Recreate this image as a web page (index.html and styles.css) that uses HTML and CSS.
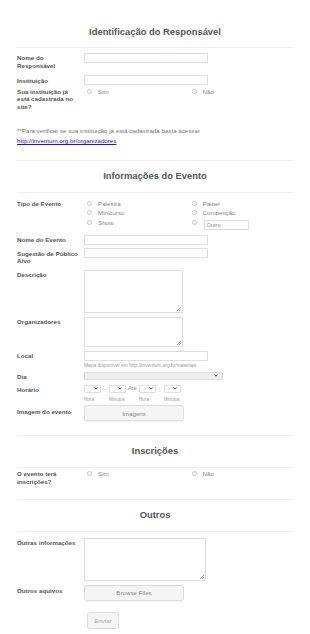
FILE: index.html
```html
<!DOCTYPE html>
<html lang="pt-BR">
<head>
    <meta charset="UTF-8">
    <meta name="viewport" content="width=device-width, initial-scale=1.0">
    <title>Cadastro de Evento</title>
    <link rel="stylesheet" href="styles.css">
</head>
<body>
    <form class="form">
        <h2 class="section-title first">Identificação do Responsável</h2>

        <div class="row row-nome">
            <label class="label">Nome do Responsável</label>
            <div class="field"><input type="text" class="text-input"></div>
        </div>
        <div class="row row-instituicao">
            <label class="label">Instituição</label>
            <div class="field"><input type="text" class="text-input"></div>
        </div>
        <div class="row row-cadastrada">
            <label class="label">Sua instituição já está cadastrada no site?</label>
            <div class="options">
                <label class="option"><input type="radio" name="cadastrada"> Sim</label>
                <label class="option"><input type="radio" name="cadastrada"> Não</label>
            </div>
        </div>
        <p class="note">
            **Para verificar se sua instituição já está cadastrada basta acessar<br>
            <a href="#">http://inventum.org.br/organizadores</a>
        </p>

        <h2 class="section-title">Informações do Evento</h2>

        <div class="row row-tipo">
            <label class="label">Tipo de Evento</label>
            <div class="options">
                <label class="option"><input type="radio" name="tipo"> Palestra</label>
                <label class="option"><input type="radio" name="tipo"> Painel</label>
                <label class="option"><input type="radio" name="tipo"> Minicurso</label>
                <label class="option"><input type="radio" name="tipo"> Competição</label>
                <label class="option"><input type="radio" name="tipo"> Show</label>
                <label class="option"><input type="radio" name="tipo"> <input type="text" class="other-input" placeholder="Outro"></label>
            </div>
        </div>
        <div class="row row-nome-evento">
            <label class="label">Nome do Evento</label>
            <div class="field"><input type="text" class="text-input"></div>
        </div>
        <div class="row">
            <label class="label">Sugestão de Público Alvo</label>
            <div class="field"><input type="text" class="text-input"></div>
        </div>
        <div class="row row-descricao">
            <label class="label">Descrição</label>
            <div class="field"><textarea class="textarea"></textarea></div>
        </div>
        <div class="row">
            <label class="label">Organizadores</label>
            <div class="field"><textarea class="textarea short"></textarea></div>
        </div>
        <div class="row">
            <label class="label">Local</label>
            <div class="field">
                <input type="text" class="text-input">
                <div class="hint">Mapa disponível em http://inventum.org.br/materiais</div>
            </div>
        </div>
        <div class="row">
            <label class="label">Dia</label>
            <div class="field">
                <div class="select day">
                    <select></select>
                    <svg class="chevron" viewBox="0 0 8 6"><polyline points="1,1 4,4.5 7,1"/></svg>
                </div>
            </div>
        </div>
        <div class="row row-horario">
            <label class="label">Horário</label>
            <div class="time">
                <div class="time-unit">
                    <div class="select small"><select></select><svg class="chevron" viewBox="0 0 8 6"><polyline points="1,1 4,4.5 7,1"/></svg></div>
                    <span class="sub">Hora</span>
                </div>
                <span class="sep">:</span>
                <div class="time-unit">
                    <div class="select small"><select></select><svg class="chevron" viewBox="0 0 8 6"><polyline points="1,1 4,4.5 7,1"/></svg></div>
                    <span class="sub">Minutos</span>
                </div>
                <span class="until">Até</span>
                <div class="time-unit">
                    <div class="select small"><select></select><svg class="chevron" viewBox="0 0 8 6"><polyline points="1,1 4,4.5 7,1"/></svg></div>
                    <span class="sub">Hora</span>
                </div>
                <span class="sep">:</span>
                <div class="time-unit">
                    <div class="select small"><select></select><svg class="chevron" viewBox="0 0 8 6"><polyline points="1,1 4,4.5 7,1"/></svg></div>
                    <span class="sub">Minutos</span>
                </div>
            </div>
        </div>
        <div class="row">
            <label class="label label-button">Imagem do evento</label>
            <div class="field"><button type="button" class="btn">Imagens</button></div>
        </div>

        <h2 class="section-title">Inscrições</h2>

        <div class="row row-inscricoes">
            <label class="label">O evento terá inscrições?</label>
            <div class="options">
                <label class="option"><input type="radio" name="inscricoes"> Sim</label>
                <label class="option"><input type="radio" name="inscricoes"> Não</label>
            </div>
        </div>

        <h2 class="section-title">Outros</h2>

        <div class="row row-outras">
            <label class="label">Outras informações</label>
            <div class="field"><textarea class="textarea wide"></textarea></div>
        </div>
        <div class="row">
            <label class="label label-button">Outros aquivos</label>
            <div class="field"><button type="button" class="btn">Browse Files</button></div>
        </div>
        <div class="row row-submit">
            <span></span>
            <div class="field"><button type="submit" class="btn submit">Enviar</button></div>
        </div>
    </form>
</body>
</html>
```

FILE: styles.css
```css
body, html {
    margin: 0;
    padding: 0;
    background: #fff;
    font-family: 'Liberation Sans', Arial, sans-serif;
    font-size: 6.2px;
    color: #555;
}
.form {
    margin: 0 17px;
}

/* Section titles */
.section-title {
    margin: 14px 0 0;
    padding: 10px 0 11px;
    text-align: center;
    font-size: 9.4px;
    line-height: 10px;
    font-weight: bold;
    color: #555;
    border-top: 1px solid #eee;
    border-bottom: 1px solid #eee;
}
.section-title.first {
    margin-top: 0;
    padding: 27px 0 10px;
    border-top: none;
}

/* Rows */
.row {
    display: grid;
    grid-template-columns: 67px 1fr;
    align-items: start;
    margin-top: 3.5px;
}
.row-nome { margin-top: 5px; }
.row-instituicao { margin-top: 6px; }
.row-cadastrada { margin-top: 1.3px; }
.row-tipo { margin-top: 5px; }
.row-nome-evento { margin-top: 7.5px; }
.row-descricao { margin-top: 5px; }
.row-horario { margin-top: 4.5px; }
.row-inscricoes { margin-top: 0.5px; }
.row-outras { margin-top: 6px; }
.row-submit { margin-top: 11px; }

.label {
    padding: 1.25px 3px 0 0;
    line-height: 7.5px;
    font-weight: bold;
    color: #555;
}
.label-button {
    padding-top: 2.5px;
}

/* Inputs */
.text-input {
    display: block;
    box-sizing: border-box;
    width: 124px;
    height: 10px;
    margin: 0;
    padding: 0 2px;
    border: 1px solid #ddd;
    border-radius: 1px;
    font: inherit;
}
.textarea {
    display: block;
    box-sizing: border-box;
    width: 99px;
    height: 43.6px;
    margin: 0;
    border: 1px solid #ddd;
    border-radius: 1px;
    font: inherit;
    resize: none;
    /* small resize grip */
    background: linear-gradient(135deg, transparent 48%, #aaa 48%, #aaa 60%, transparent 60%, transparent 74%, #aaa 74%, #aaa 86%, transparent 86%) no-repeat right 1px bottom 1px / 4px 4px, #fff;
}
.textarea.short {
    height: 30.4px;
}
.textarea.wide {
    width: 122px;
    height: 43.4px;
}
.hint {
    margin-top: 2.5px;
    font-size: 4.9px;
    line-height: 5px;
    color: #999;
}

/* Radios */
.options {
    display: grid;
    grid-template-columns: 1fr 1fr;
    grid-auto-rows: 9.7px;
}
.option {
    display: flex;
    align-items: center;
    gap: 6px;
    padding-left: 3px;
    color: #888;
}
.option input[type="radio"] {
    appearance: none;
    flex: none;
    box-sizing: border-box;
    width: 5px;
    height: 5px;
    margin: 0;
    border: 1px solid #c4c4c4;
    border-radius: 50%;
    background: #fff;
}
.other-input {
    box-sizing: border-box;
    width: 45px;
    height: 10px;
    margin: 4px 0 0 1px;
    padding: 0 2px;
    border: 1px solid #ddd;
    font: inherit;
    font-size: 5.6px;
    color: #888;
}
.other-input::placeholder {
    color: #888;
}

.note {
    margin: 16px 0 0;
    line-height: 10px;
    color: #777;
}
.note a {
    color: #1a0dff;
}

/* Selects */
.select {
    position: relative;
    box-sizing: border-box;
    border: 1px solid #ddd;
    border-radius: 1px;
    background: #fff;
}
.select select {
    appearance: none;
    display: block;
    width: 100%;
    height: 100%;
    margin: 0;
    padding: 0;
    border: none;
    background: transparent;
}
.select.day {
    width: 139px;
    height: 8.5px;
    background: #eee;
}
.select.small {
    width: 17px;
    height: 8.3px;
}
.chevron {
    position: absolute;
    top: 50%;
    right: 4px;
    width: 4px;
    height: 3px;
    margin-top: -1.5px;
    fill: none;
    stroke: #444;
    stroke-width: 1.8;
}
.select.small .chevron {
    right: 2.5px;
}

.time {
    display: flex;
    align-items: flex-start;
}
.time-unit {
    display: flex;
    flex-direction: column;
}
.sub {
    margin-top: 3.7px;
    font-size: 4.6px;
    line-height: 5px;
    color: #999;
}
.sep {
    margin: 0 3px;
    line-height: 9px;
    color: #999;
}
.until {
    margin: 0 2px;
    line-height: 5px;
    color: #999;
}

/* Buttons */
.btn {
    display: block;
    box-sizing: border-box;
    width: 100px;
    height: 16px;
    margin: 0;
    padding: 0;
    border: 1px solid #ddd;
    border-radius: 3px;
    background: #f5f5f5;
    box-shadow: 0 1px 1px rgba(0, 0, 0, 0.05);
    font: inherit;
    color: #888;
}
.btn.submit {
    width: 32px;
    height: 17px;
    margin-left: 3px;
    color: #aaa;
}
```
